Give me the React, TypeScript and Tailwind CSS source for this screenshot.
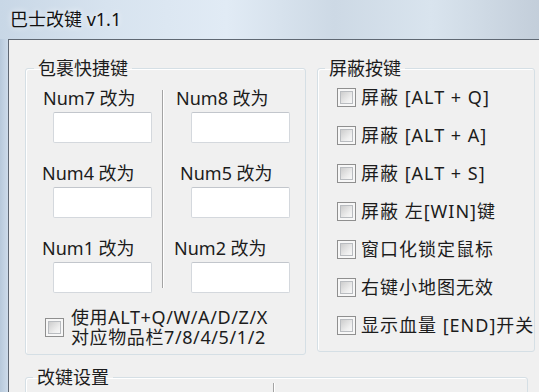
import React from "react";

const FONT = "font-['Noto_Sans','Noto_Sans_CJK_SC',sans-serif]";

// Win7 style checkbox: grey frame with a soft gradient inside
function CheckBox() {
  return (
    <span className="flex h-[19px] w-[19px] flex-shrink-0 items-center justify-center border border-[#8f8f8f] bg-[#f7f7f7]">
      <span className="h-[13px] w-[13px] border border-[#b9bcc0] bg-[linear-gradient(135deg,#cdcdcd,#efefef_70%,#f7f7f7)]" />
    </span>
  );
}

function TextBox() {
  return (
    <div className="h-[31px] w-[99px] rounded-[2px] border border-[#d4d8dd] border-t-[#c2c6cc] bg-white" />
  );
}

type KeyRow = { label: string; labelClass: string };

function KeyColumn({ rows, boxClass }: { rows: KeyRow[]; boxClass: string }) {
  return (
    <div className="flex flex-col gap-[20px] pt-[10px]">
      {rows.map((r) => (
        <div key={r.label} className="flex flex-col gap-[4px]">
          <span className={"leading-[20px] " + r.labelClass}>{r.label}</span>
          <div className={boxClass}>
            <TextBox />
          </div>
        </div>
      ))}
    </div>
  );
}

const blockItems = [
  "屏蔽 [ALT + Q]",
  "屏蔽 [ALT + A]",
  "屏蔽 [ALT + S]",
  "屏蔽 左[WIN]键",
  "窗口化锁定鼠标",
  "右键小地图无效",
  "显示血量 [END]开关",
];

export default function App() {
  return (
    <div
      className={
        "flex h-[392px] w-[539px] flex-col overflow-hidden text-[18px] text-[#1c1c1c] " +
        FONT
      }
    >
      {/* Title bar */}
      <div className="h-[39px] flex-shrink-0 bg-[linear-gradient(to_right,#c8d7e6,#d7e3ef_20%,#e1ebf5_42%,#cdd9e5_62%,#d9e4ee_80%,#c3ceda)] pl-[10px] pt-[6px]">
        <span className="leading-[22px] text-[#111] [text-shadow:0_0_6px_#ffffff]">
          巴士改键 v1.1
        </span>
      </div>

      <div className="flex flex-1">
        {/* window frame, left side */}
        <div className="w-[8px] flex-shrink-0 bg-[linear-gradient(to_right,#b7c9db,#cddbea)]" />

        {/* client area */}
        <div className="flex-1 border-l border-t border-[#5f6873] bg-[#f0f0f0] pl-[16px] pt-[18px]">
          <div className="flex items-start gap-[11px]">
            {/* 包裹快捷键 */}
            <fieldset className="w-[281px] rounded-[3px] border border-[#d5dfe5] pb-[7px] shadow-[inset_1px_1px_0_#ffffff]">
              <legend className="ml-[8px] px-[4px] leading-[20px]">包裹快捷键</legend>
              <div className="flex">
                <div className="w-[136px]">
                  <KeyColumn
                    boxClass="pl-[27px]"
                    rows={[
                      { label: "Num7 改为", labelClass: "pl-[17px]" },
                      { label: "Num4 改为", labelClass: "pl-[16px]" },
                      { label: "Num1 改为", labelClass: "pl-[16px]" },
                    ]}
                  />
                </div>
                <div className="mt-[12px] h-[198px] w-[2px] border-l border-r border-l-[#a3a3a3] border-r-white" />
                <div className="flex-1">
                  <KeyColumn
                    boxClass="pl-[27px]"
                    rows={[
                      { label: "Num8 改为", labelClass: "pl-[12px]" },
                      { label: "Num5 改为", labelClass: "pl-[16px]" },
                      { label: "Num2 改为", labelClass: "pl-[10px]" },
                    ]}
                  />
                </div>
              </div>
              <div className="mt-[14px] flex items-center gap-[7px] pl-[19px]">
                <CheckBox />
                <span className="leading-[20px] tracking-[0.6px]">
                  使用ALT+Q/W/A/D/Z/X
                  <br />
                  对应物品栏7/8/4/5/1/2
                </span>
              </div>
            </fieldset>

            {/* 屏蔽按键 */}
            <fieldset className="w-[211px] rounded-[3px] border border-[#d5dfe5] pb-[7px] shadow-[inset_1px_1px_0_#ffffff]">
              <legend className="ml-[7px] px-[4px] leading-[20px]">屏蔽按键</legend>
              <div className="flex flex-col">
                {blockItems.map((t) => (
                  <div
                    key={t}
                    className="flex h-[38px] items-center gap-[5px] overflow-hidden pl-[19px]"
                  >
                    <CheckBox />
                    <span className="whitespace-nowrap leading-[20px] tracking-[1px]">{t}</span>
                  </div>
                ))}
              </div>
            </fieldset>
          </div>

          {/* 改键设置 */}
          <fieldset className="mt-[12px] w-[503px] rounded-[3px] border border-[#d5dfe5] shadow-[inset_1px_1px_0_#ffffff]">
            <legend className="ml-[7px] px-[4px] leading-[20px]">改键设置</legend>
            <div className="flex pl-[247px]">
              <div className="-mt-[4px] h-[40px] w-[2px] border-l border-r border-l-[#a3a3a3] border-r-white" />
            </div>
          </fieldset>
        </div>
      </div>
    </div>
  );
}
